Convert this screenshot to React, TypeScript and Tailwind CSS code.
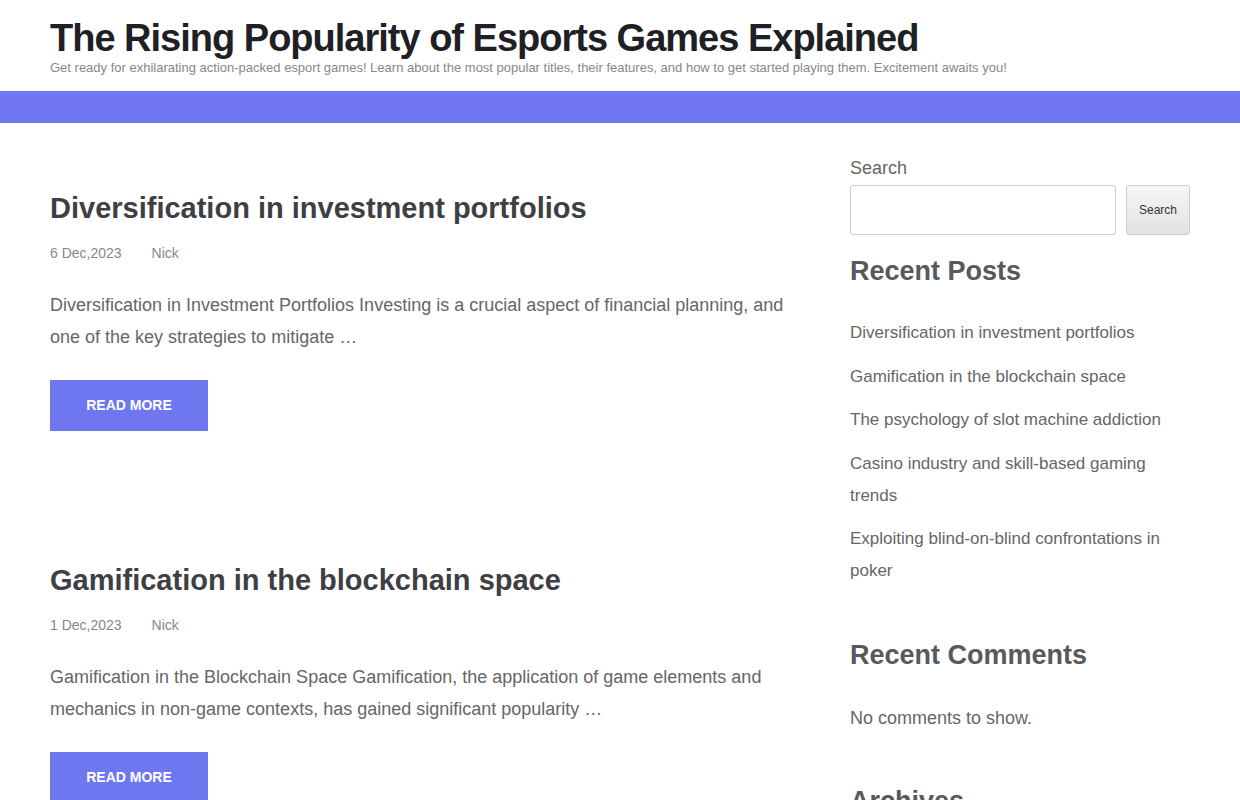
import React from "react";

const posts = [
  {
    title: "Diversification in investment portfolios",
    date: "6 Dec,2023",
    author: "Nick",
    excerpt:
      "Diversification in Investment Portfolios Investing is a crucial aspect of financial planning, and one of the key strategies to mitigate …",
  },
  {
    title: "Gamification in the blockchain space",
    date: "1 Dec,2023",
    author: "Nick",
    excerpt:
      "Gamification in the Blockchain Space Gamification, the application of game elements and mechanics in non-game contexts, has gained significant popularity …",
  },
];

const recent = [
  "Diversification in investment portfolios",
  "Gamification in the blockchain space",
  "The psychology of slot machine addiction",
  "Casino industry and skill-based gaming trends",
  "Exploiting blind-on-blind confrontations in poker",
];

const App = () => {
  return (
    <div className="min-h-screen bg-white font-['Liberation_Sans',Arial,sans-serif]">
      <header className="px-[50px] pt-[16px] h-[91px]">
        <h1 className="text-[38px] leading-[44px] font-bold tracking-[-1px] text-[#1e2025]">
          The Rising Popularity of Esports Games Explained
        </h1>
        <p className="text-[13px] leading-[16px] text-[#888888]">
          Get ready for exhilarating action-packed esport games! Learn about the most popular titles, their
          features, and how to get started playing them. Excitement awaits you!
        </p>
      </header>
      <nav className="h-[32px] bg-[#7077f0]" />

      <div className="flex gap-[50px] px-[50px]">
        <main className="w-[750px] pt-[67px]">
          {posts.map((post) => (
            <article key={post.title} className="mb-[131px]">
              <h2 className="text-[29px] leading-[36px] font-bold text-[#3d3f44]">{post.title}</h2>
              <div className="mt-[17px] flex gap-[30px] text-[14px] leading-[20px] text-[#888888]">
                <span>{post.date}</span>
                <span>{post.author}</span>
              </div>
              <p className="mt-[26px] text-[18px] leading-[32px] text-[#666666]">{post.excerpt}</p>
              <button className="mt-[27px] h-[51px] w-[158px] bg-[#6f77f0] text-[14px] font-bold uppercase text-white">
                Read more
              </button>
            </article>
          ))}
        </main>

        <aside className="w-[340px] pt-[32px]">
          <label className="block text-[18px] leading-[26px] text-[#666666]">Search</label>
          <div className="mt-[4px] flex gap-[10px]">
            <input className="h-[50px] w-[266px] rounded-[3px] border border-[#cccccc] bg-white" />
            <button className="h-[50px] w-[64px] rounded-[3px] border border-[#cccccc] bg-gradient-to-b from-[#f6f6f6] to-[#e2e2e2] text-[12px] text-[#333333]">
              Search
            </button>
          </div>

          <h2 className="mt-[19px] text-[27px] leading-[34px] font-bold text-[#58595e]">Recent Posts</h2>
          <ul className="mt-[29px]">
            {recent.map((r) => (
              <li key={r} className="mb-[11.5px] text-[17px] leading-[32px] text-[#666666]">
                {r}
              </li>
            ))}
          </ul>

          <h2 className="mt-[51px] text-[27px] leading-[34px] font-bold text-[#58595e]">Recent Comments</h2>
          <p className="mt-[33px] text-[18px] leading-[26px] text-[#666666]">No comments to show.</p>

          <h2 className="mt-[53px] text-[27px] leading-[34px] font-bold text-[#58595e]">Archives</h2>
        </aside>
      </div>
    </div>
  );
};

export default App;
